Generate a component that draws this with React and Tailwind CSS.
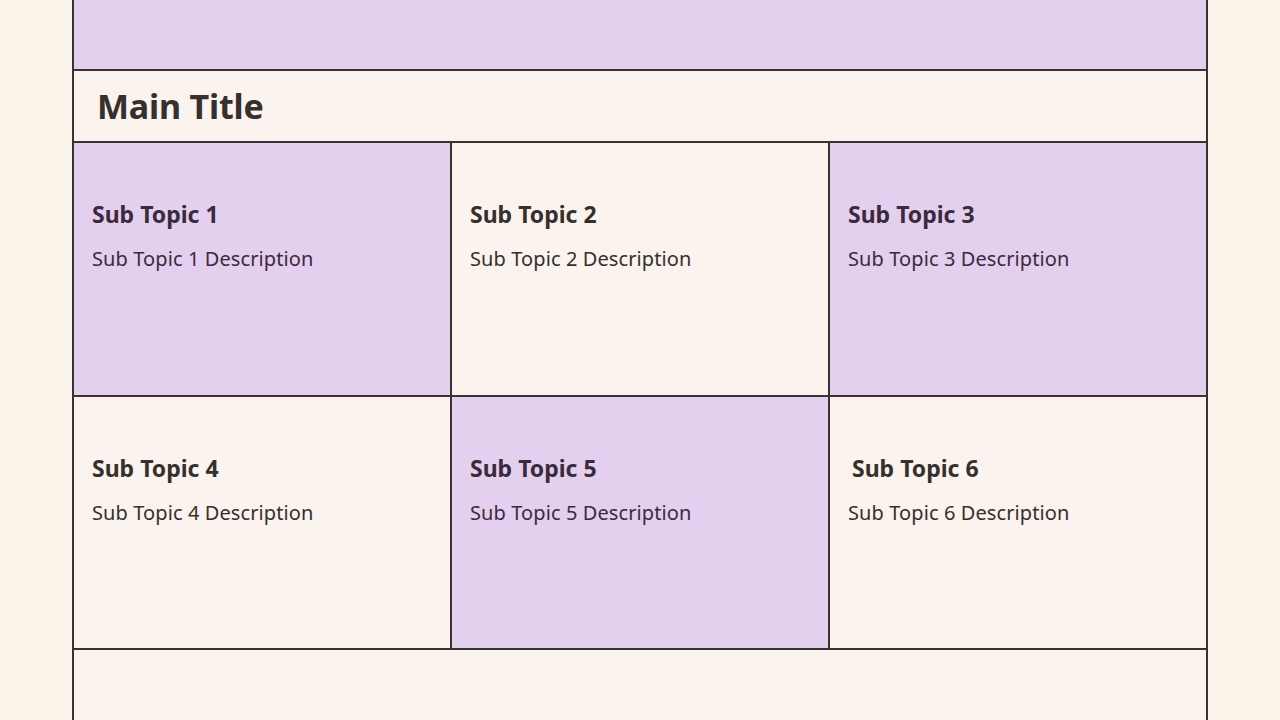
import React from "react";

const topics = [
  { n: 1, purple: true },
  { n: 2, purple: false },
  { n: 3, purple: true },
  { n: 4, purple: false },
  { n: 5, purple: true },
  { n: 6, purple: false },
];

const App = () => {
  return (
    <div
      className="min-h-[720px] h-[720px] overflow-hidden bg-[#fbf4ea] flex"
      style={{ fontFamily: "'Noto Sans', Lato, sans-serif" }}
    >
      <div className="ml-[72px] w-[1136px] h-full border-x-2 border-[#3a3230] flex flex-col">
        <div className="h-[71px] shrink-0 bg-[#e3cfee] border-b-2 border-[#3a3230]" />
        <div className="h-[72px] shrink-0 bg-[#faf3ee] border-b-2 border-[#3a3230] flex items-center px-[23px]">
          <h1 className="text-[34px] font-bold text-[#35302b] tracking-[-0.2px]">
            Main Title
          </h1>
        </div>
        <div className="grid grid-cols-[378px_378px_1fr] grid-rows-[254px_253px] shrink-0">
          {topics.map((t, i) => (
            <div
              key={t.n}
              className={
                "px-[18px] pt-[56px] border-[#3a3230] " +
                (t.purple ? "bg-[#e3cfee] " : "bg-[#faf3ee] ") +
                (i % 3 !== 2 ? "border-r-2 " : "") +
                "border-b-2"
              }
            >
              <h2
                className={
                  "text-[23px] font-bold leading-[30px] " +
                  (t.purple ? "text-[#3b2a3b]" : "text-[#35302b]") +
                  (t.n === 6 ? " pl-[4px]" : "")
                }
              >
                Sub Topic {t.n}
              </h2>
              <p
                className={
                  "mt-[16px] text-[20px] leading-[28px] tracking-[0.1px] " +
                  (t.purple ? "text-[#3b2a3b]" : "text-[#35302b]")
                }
              >
                Sub Topic {t.n} Description
              </p>
            </div>
          ))}
        </div>
        <div className="flex-1 bg-[#faf3ee]" />
      </div>
    </div>
  );
};

export default App;
